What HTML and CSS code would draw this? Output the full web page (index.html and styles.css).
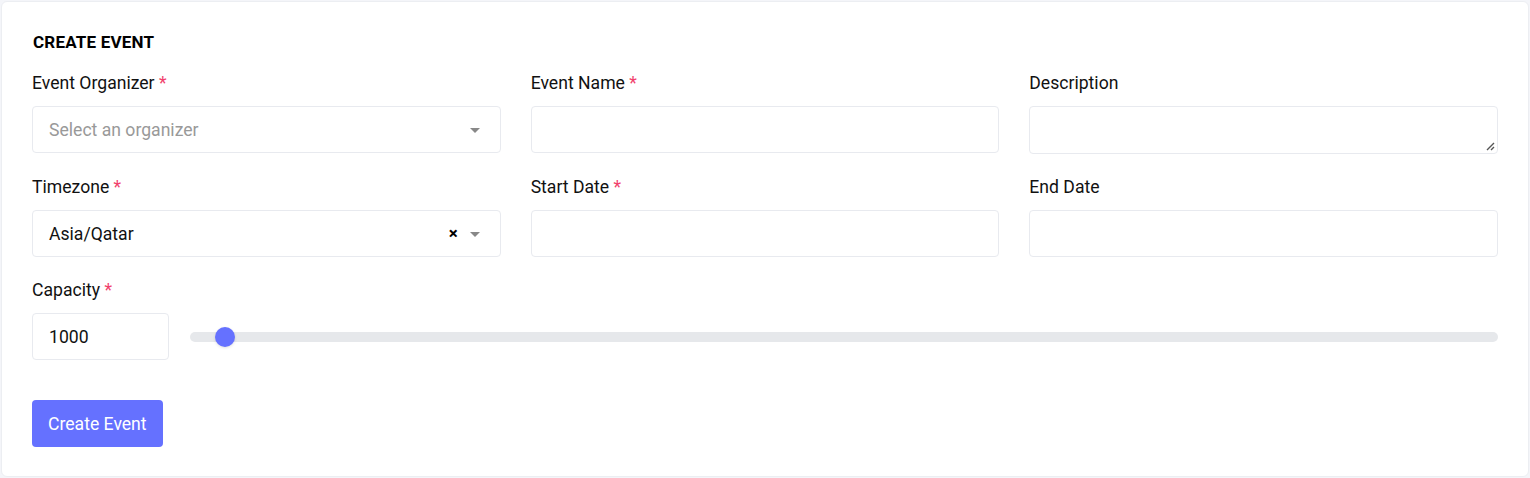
FILE: index.html
```html
<!DOCTYPE html>
<html lang="en">
<head>
<meta charset="utf-8">
<title>Create Event</title>
<link rel="stylesheet" href="styles.css">
</head>
<body>
<div class="card">
  <h2 class="title">CREATE EVENT</h2>
  <div class="grid">
    <div class="field">
      <label class="label">Event Organizer <span class="req">*</span></label>
      <div class="control select">
        <span class="placeholder">Select an organizer</span>
        <span class="arrow"></span>
      </div>
    </div>
    <div class="field">
      <label class="label">Event Name <span class="req">*</span></label>
      <div class="control"></div>
    </div>
    <div class="field">
      <label class="label">Description</label>
      <div class="control textarea">
        <svg class="grip" width="9" height="9" viewBox="0 0 9 9"><path d="M8 1L1 8M8 5L5 8" stroke="#555" stroke-width="1.4" fill="none"/></svg>
      </div>
    </div>
    <div class="field">
      <label class="label">Timezone <span class="req">*</span></label>
      <div class="control select">
        <span class="value">Asia/Qatar</span>
        <span class="clear">×</span>
        <span class="arrow"></span>
      </div>
    </div>
    <div class="field">
      <label class="label">Start Date <span class="req">*</span></label>
      <div class="control"></div>
    </div>
    <div class="field">
      <label class="label">End Date</label>
      <div class="control"></div>
    </div>
  </div>
  <div class="field capacity-field">
    <label class="label">Capacity <span class="req">*</span></label>
    <div class="capacity-row">
      <div class="control number"><span class="value">1000</span></div>
      <div class="slider">
        <div class="track"></div>
        <div class="thumb"></div>
      </div>
    </div>
  </div>
  <button class="btn">Create Event</button>
</div>
</body>
</html>
```

FILE: styles.css
```css
* { box-sizing: border-box; }
html, body { margin: 0; }
body {
  background: #f4f5f9;
  padding: 1px;
  font-family: Roboto, "Liberation Sans", sans-serif;
  color: #111;
  font-size: 17.6px;
}
.card {
  background: #fff;
  border: 1px solid #eceef2;
  border-radius: 6px;
  padding: 28px 30px 29px 30px;
  height: 476px;
}
.title {
  margin: 0 0 16px 1px;
  font-size: 17px;
  font-weight: 700;
  line-height: 24px;
  color: #000;
  letter-spacing: 0.2px;
}
.grid {
  display: grid;
  grid-template-columns: 1fr 1fr 1fr;
  column-gap: 30px;
  row-gap: 21px;
}
.field {
  display: flex;
  flex-direction: column;
}
.label {
  line-height: 24px;
  margin-bottom: 11px;
  color: #111;
  padding-top: 1px;
}
.req { color: #f1416c; }
.control {
  height: 47px;
  border: 1px solid #e8eaef;
  border-radius: 4px;
  background: #fff;
  display: flex;
  align-items: center;
  padding: 0 16px;
}
.textarea {
  height: 48px;
  position: relative;
  margin-bottom: -1px;
}
.grip {
  position: absolute;
  right: 2px;
  bottom: 2px;
}
.select .placeholder { color: #999; flex: 1; }
.select .value { flex: 1; color: #111; }
.arrow {
  width: 0;
  height: 0;
  border-left: 5px solid transparent;
  border-right: 5px solid transparent;
  border-top: 5px solid #888;
  margin-right: 4px;
  margin-top: 2px;
}
.clear {
  font-weight: 700;
  font-size: 17px;
  color: #000;
  margin-right: 12px;
  line-height: 1;
}
.capacity-field { margin-top: 20px; }
.capacity-row {
  display: flex;
  align-items: center;
  gap: 21px;
}
.number {
  width: 137px;
  flex: none;
}
.slider {
  flex: 1;
  position: relative;
  height: 20px;
  display: flex;
  align-items: center;
}
.track {
  width: 100%;
  height: 10px;
  background: #e6e8eb;
  border-radius: 5px;
}
.thumb {
  position: absolute;
  left: 25px;
  top: 0;
  width: 20px;
  height: 20px;
  border-radius: 50%;
  background: #6571ff;
  box-shadow: 0 1px 3px rgba(0,0,0,0.12);
}
.btn {
  align-self: flex-start;
  margin-top: 40px;
  height: 47px;
  padding: 0 16px;
  background: #6571ff;
  color: #fff;
  border: none;
  border-radius: 4px;
  font-family: Roboto, "Liberation Sans", sans-serif;
  font-size: 17.6px;
}
```
